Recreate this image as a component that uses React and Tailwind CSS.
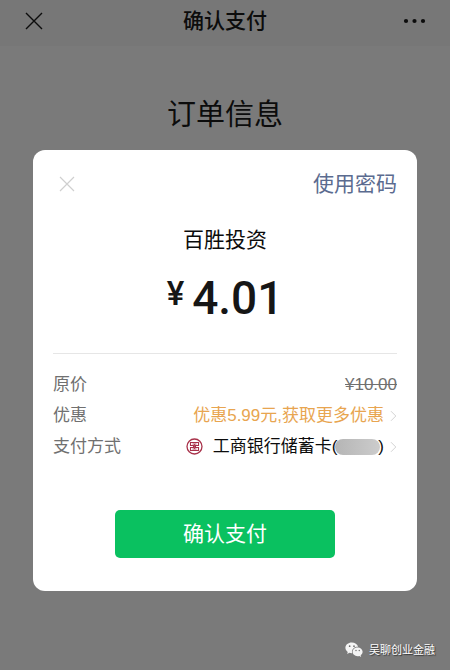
import React from "react";

const BankLogo = () => (
  <svg className="h-[17px] w-[17px]" viewBox="0 0 34 34" fill="none" stroke="#a8324a">
    <circle cx="17" cy="17" r="15" strokeWidth="2.6" />
    <path d="M15 15H9V9h16v6h-6v4h6v6H9v-6h6z" strokeWidth="2.2" />
    <path d="M13 12h8M13 22h8M17 12v10" strokeWidth="1.8" />
  </svg>
);

const Arrow = () => (
  <svg
    className="h-3 w-[7px] shrink-0"
    viewBox="0 0 7 12"
    fill="none"
    stroke="#d4d4d4"
  >
    <path d="M1 1.2l4.8 4.8L1 10.8" />
  </svg>
);

const WechatLogo = () => (
  <svg className="h-4 w-[18px]" viewBox="0 0 36 32">
    <path
      fill="#f4f4f4"
      d="M13.5 1C6.3 1 .8 5.8.8 11.700c0 3.400 1.800 6.200 4.700 8.200L4.300 24l4.600-2.300c1.400.4 2.900.6 4.600.6h.8c-.3-1-.4-1.900-.4-2.800 0-5.800 5.100-10 11.300-10h.9C25 4.500 19.700 1 13.500 1z"
    />
    <path
      fill="#f4f4f4"
      d="M25.200 11c-5.800 0-10 3.900-10 8.700s4.200 8.700 10 8.700c1.200 0 2.400-.2 3.500-.5l3.600 2-1-3.300c2.400-1.700 3.900-4.100 3.900-6.900 0-4.800-4.500-8.700-10-8.700z"
    />
    <g fill="#6b6b6b">
      <circle cx="9.300" cy="8.300" r="1.700" />
      <circle cx="18" cy="8.300" r="1.700" />
      <circle cx="22" cy="17" r="1.400" />
      <circle cx="28.500" cy="17" r="1.400" />
    </g>
  </svg>
);

export default function App() {
  return (
    <div className="relative min-h-screen w-full bg-[#7a7a7a] font-['Liberation_Sans','Noto_Sans_CJK_SC',sans-serif] text-[#0c0c0c]">
      <header className="grid h-[46px] grid-cols-3 items-center bg-[#777777] px-6 pb-1">
        <button type="button" aria-label="关闭页面" className="justify-self-start">
          <svg
            className="h-5 w-5"
            viewBox="0 0 20 20"
            fill="none"
            stroke="currentColor"
            strokeWidth="1.4"
          >
            <path d="M2 2l16 16M18 2L2 18" />
          </svg>
        </button>
        <h1 className="text-center text-[21px] leading-6 font-medium">确认支付</h1>
        <button type="button" aria-label="更多" className="justify-self-end">
          <svg className="h-1.5 w-6" viewBox="0 0 24 6" fill="currentColor">
            <circle cx="4" cy="3" r="2.100" />
            <circle cx="12.500" cy="3" r="2.100" />
            <circle cx="21" cy="3" r="2.100" />
          </svg>
        </button>
      </header>
      <h2 className="pt-[51px] text-center text-[29px] leading-9">订单信息</h2>

      <div className="absolute inset-0 flex flex-col justify-between px-[33px] pt-[150px]">
        <div
          role="dialog"
          aria-label="确认支付"
          className="rounded-xl bg-white px-5 pt-5 pb-[33px]"
        >
          <div className="flex items-center justify-between">
            <button type="button" aria-label="关闭" className="px-1.5">
              <svg
                className="h-4 w-4"
                viewBox="0 0 16 16"
                fill="none"
                stroke="#cfcfcf"
                strokeWidth="1.2"
              >
                <path d="M1 1l14 14M15 1L1 15" />
              </svg>
            </button>
            <button type="button" className="text-[21px] leading-7 text-[#5b6b8f]">
              使用密码
            </button>
          </div>

          <p className="mt-7 text-center text-[21px] leading-7">百胜投资</p>
          <p className="mt-5 flex justify-center gap-2 font-['Roboto',sans-serif] font-medium text-[#161616]">
            <span className="text-[33px] leading-10">¥</span>
            <span className="text-[46px] leading-[48px]">4.01</span>
          </p>

          <dl className="mt-[31px] border-t border-[#e6e6e6] pt-[15px] text-[17px] leading-[31px] text-[#707070]">
            <div className="flex justify-between">
              <dt>原价</dt>
              <dd className="line-through">¥10.00</dd>
            </div>
            <div className="flex justify-between">
              <dt>优惠</dt>
              <dd>
                <a href="#discount" className="flex items-center gap-1.5 text-[#e8a550]">
                  优惠5.99元,获取更多优惠
                  <Arrow />
                </a>
              </dd>
            </div>
            <div className="flex justify-between">
              <dt>支付方式</dt>
              <dd>
                <a href="#card" className="flex items-center gap-1.5 text-[#0c0c0c]">
                  <BankLogo />
                  <span className="flex items-center pl-1">
                    工商银行储蓄卡(
                    <span className="-mx-0.5 h-4 w-[45px] rounded-lg bg-linear-to-r from-[#b5b5b5] to-[#cccccc]" />
                    )
                  </span>
                  <Arrow />
                </a>
              </dd>
            </div>
          </dl>

          <button
            type="button"
            className="mx-auto mt-12 block h-12 w-[220px] rounded-[5px] bg-[#0ac160] text-[21px] leading-7 text-white"
          >
            确认支付
          </button>
        </div>

        <div className="-mr-[18px] flex items-center justify-end gap-1.5 pb-3 text-[11px] leading-4 text-white text-shadow-[1px_1px_1px_#333333]">
          <WechatLogo />
          吴聊创业金融
        </div>
      </div>
    </div>
  );
}
